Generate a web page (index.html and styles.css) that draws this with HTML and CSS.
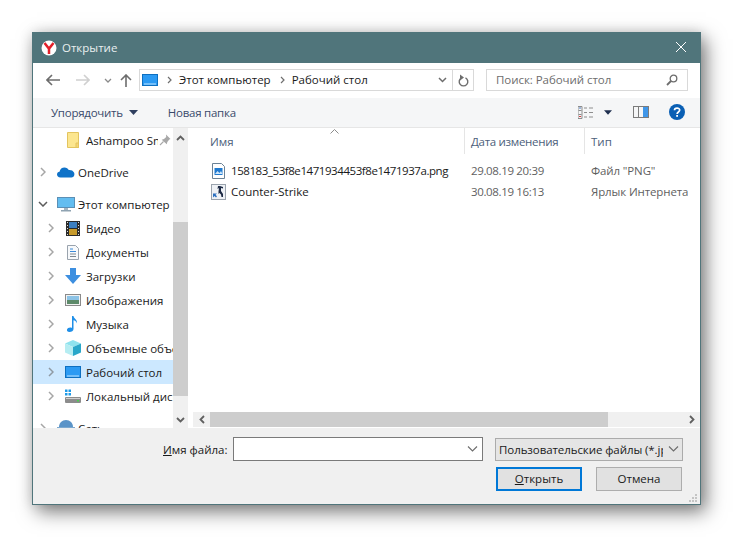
FILE: index.html
```html
<!DOCTYPE html>
<html lang="ru">
<head>
<meta charset="utf-8">
<title>Открытие</title>
<link rel="stylesheet" href="styles.css">
</head>
<body>
<div class="window">
  <header class="titlebar">
    <svg class="logo" width="16" height="16" viewBox="0 0 16 16"><circle cx="8" cy="8" r="7.5" fill="#fff"/><path d="M3.500 3 8 8.600V14M12.500 3 8 8.600" fill="none" stroke="#e3202a" stroke-width="2.500"/></svg>
    <span class="title-text">Открытие</span>
    <svg class="close" width="12" height="12" viewBox="0 0 12 12"><path d="M1 1l10 10M11 1 1 11" stroke="#fff" stroke-width="1" fill="none"/></svg>
  </header>

  <nav class="navbar">
    <svg class="nav-back" width="14" height="12" viewBox="0 0 14 12"><path d="M6 1 1 6l5 5M1 6h13" fill="none" stroke="#6d6d6d" stroke-width="1.6"/></svg>
    <svg class="nav-fwd" width="14" height="12" viewBox="0 0 14 12"><path d="M8 1l5 5-5 5M13 6H0" fill="none" stroke="#d0d0d0" stroke-width="1.6"/></svg>
    <svg class="nav-drop" width="8" height="5" viewBox="0 0 8 5"><path d="M1 1l3 3 3-3" fill="none" stroke="#8a8a8a" stroke-width="1.3"/></svg>
    <svg class="nav-up" width="12" height="13" viewBox="0 0 12 13"><path d="M1 6l5-5 5 5M6 1v12" fill="none" stroke="#6d6d6d" stroke-width="1.6"/></svg>
    <div class="address">
      <svg class="addr-icon" width="16" height="12" viewBox="0 0 16 12"><rect x=".5" y=".5" width="15" height="11" fill="#2b9af3" stroke="#0d6fc0"/><path d="M2 10h12" stroke="#bfe4ff"/></svg>
      <svg class="crumb-sep" width="5" height="8" viewBox="0 0 5 8"><path d="M1 1l3 3-3 3" fill="none" stroke="#6f6f6f" stroke-width="1.2"/></svg>
      <span class="crumb">Этот компьютер</span>
      <svg class="crumb-sep" width="5" height="8" viewBox="0 0 5 8"><path d="M1 1l3 3-3 3" fill="none" stroke="#6f6f6f" stroke-width="1.2"/></svg>
      <span class="crumb">Рабочий стол</span>
      <svg class="addr-drop" width="9" height="6" viewBox="0 0 9 6"><path d="M1 1l3.500 3.500L8 1" fill="none" stroke="#6d6d6d" stroke-width="1.500"/></svg>
      <div class="addr-refresh">
        <svg width="12" height="13" viewBox="0 0 12 13"><path d="M4.500 3.800A4.300 4.300 0 1 0 8.500 3.800" fill="none" stroke="#6d6d6d" stroke-width="1.400"/><path d="M3 .5v6l4-3z" fill="#6d6d6d"/></svg>
      </div>
    </div>
    <div class="search">
      <span class="search-text">Поиск: Рабочий стол</span>
      <svg width="12" height="12" viewBox="0 0 12 12"><circle cx="7.500" cy="4.500" r="3.300" fill="none" stroke="#6d6d6d" stroke-width="1.300"/><path d="M5 7l-4 4" stroke="#6d6d6d" stroke-width="1.800"/></svg>
    </div>
  </nav>

  <div class="toolbar">
    <span class="tool-btn">Упорядочить</span>
    <svg class="tool-caret" width="9" height="5" viewBox="0 0 9 5"><path d="M0 0h9L4.500 5z" fill="#2f3f5f"/></svg>
    <span class="tool-btn tool-new">Новая папка</span>
    <svg class="view-icon" width="16" height="13" viewBox="0 0 16 13"><path d="M0 .5h4v12H0zM.5 4.500h3M.5 8.500h3" fill="none" stroke="#8d8d8d"/><path d="M6 2h3M11 2h4M6 6.500h3M11 6.500h4M6 11h3M11 11h4" stroke="#8d8d8d"/><path d="M1 2h2" stroke="#4a78c0"/><path d="M1 10.500h2" stroke="#d04040"/></svg>
    <svg class="view-caret" width="8" height="5" viewBox="0 0 9 5"><path d="M0 0h9L4.500 5z" fill="#1f2f4f"/></svg>
    <svg class="pane-icon" width="16" height="12" viewBox="0 0 16 12"><rect x=".5" y=".5" width="15" height="11" fill="#f5f6f7" stroke="#7b7b7b"/><path d="M5.500 1v10" stroke="#7b7b7b"/><rect x="10" y="1" width="5" height="10" fill="#3f96e8"/></svg>
    <svg class="help-icon" width="16" height="16" viewBox="0 0 16 16"><circle cx="8" cy="8" r="8" fill="#0a5fb4"/><path d="M5.500 6.200C5.500 3.500 10.700 3.500 10.700 6.100 10.700 8 8.100 7.900 8.100 10" fill="none" stroke="#fff" stroke-width="1.700"/><rect x="7.200" y="11" width="1.800" height="1.800" fill="#fff"/></svg>
  </div>

  <div class="content">
    <aside class="tree">
      <div class="tree-row sub">
        <span class="chev-space"></span>
        <svg class="tree-icon folder" width="14" height="16" viewBox="0 0 14 16"><path d="M1.500.5h11v15h-11z" fill="#fce68f" stroke="#e3c45f"/><path d="M10 11h2.500v4.500H10z" fill="#f4d672" stroke="#e3c45f"/></svg>
        <span class="tree-label">Ashampoo Sn</span>
        <svg class="pin" width="12" height="12" viewBox="0 0 12 12"><path d="M7 .5l4.500 4.500-1.200.6-2 2.400-.5 2.300L2.700 5.700l2.300-.6 2.200-2z" fill="#a8a8a8"/><path d="M4.500 7.500 1 11" stroke="#a8a8a8" stroke-width="1.100"/></svg>
      </div>
      <div class="tree-row top">
        <svg class="chev" width="6" height="10" viewBox="0 0 6 10"><path d="M1 1l4 4-4 4" fill="none" stroke="#a6a6a6" stroke-width="1.500"/></svg>
        <svg class="tree-icon-wide" width="18" height="12" viewBox="0 0 18 12"><path d="M3.500 11.500C1.200 11.500 0 10 0 8.500 0 7 1 6 2.500 5.800 3 3 5 1.500 7.500 1.500 9.500 1.500 11 2.500 11.700 4 14 3.800 16 4.500 17 6.500 18 8.500 17 11.500 14.500 11.500z" fill="#0f72c8"/></svg>
        <span class="tree-label">OneDrive</span>
      </div>
      <div class="tree-row top">
        <svg class="chev chev-open" width="10" height="6" viewBox="0 0 10 6"><path d="M1 1l4 4 4-4" fill="none" stroke="#5c5c5c" stroke-width="1.500"/></svg>
        <svg class="tree-icon-wide" width="18" height="15" viewBox="0 0 18 15"><rect x=".5" y=".5" width="17" height="10" fill="#63bdf0" stroke="#5b8fb5"/><rect x="7" y="11" width="4" height="2" fill="#a5b5c0"/><rect x="4" y="13" width="10" height="1.500" fill="#8fa3b2"/></svg>
        <span class="tree-label">Этот компьютер</span>
      </div>
      <div class="tree-row sub">
        <svg class="chev" width="6" height="10" viewBox="0 0 6 10"><path d="M1 1l4 4-4 4" fill="none" stroke="#a6a6a6" stroke-width="1.500"/></svg>
        <svg class="tree-icon" width="14" height="15" viewBox="0 0 14 15"><rect width="14" height="15" fill="#2b2b2b"/><rect x="3" y="1" width="8" height="6" fill="#3c7fc0"/><rect x="3" y="8" width="8" height="6" fill="#c79a2b"/><path d="M1 1.500h1M1 4.500h1M1 7.500h1M1 10.500h1M1 13.500h1M12 1.500h1M12 4.500h1M12 7.500h1M12 10.500h1M12 13.500h1" stroke="#ddd"/></svg>
        <span class="tree-label">Видео</span>
      </div>
      <div class="tree-row sub">
        <svg class="chev" width="6" height="10" viewBox="0 0 6 10"><path d="M1 1l4 4-4 4" fill="none" stroke="#a6a6a6" stroke-width="1.500"/></svg>
        <svg class="tree-icon" width="14" height="15" viewBox="0 0 14 15"><path d="M1.500.5h8l3 3v11h-11z" fill="#f7f9fb" stroke="#9aa3ad"/><path d="M4 4h3M4 6.500h6" stroke="#3b8ad9"/><path d="M4 9h6M4 11.500h6" stroke="#7d8790"/></svg>
        <span class="tree-label">Документы</span>
      </div>
      <div class="tree-row sub">
        <svg class="chev" width="6" height="10" viewBox="0 0 6 10"><path d="M1 1l4 4-4 4" fill="none" stroke="#a6a6a6" stroke-width="1.500"/></svg>
        <svg class="tree-icon" width="16" height="16" viewBox="0 0 16 16"><path d="M5 0h6v7h5l-8 9-8-9h5z" fill="#3d8fe0"/></svg>
        <span class="tree-label">Загрузки</span>
      </div>
      <div class="tree-row sub">
        <svg class="chev" width="6" height="10" viewBox="0 0 6 10"><path d="M1 1l4 4-4 4" fill="none" stroke="#a6a6a6" stroke-width="1.500"/></svg>
        <svg class="tree-icon" width="16" height="12" viewBox="0 0 16 12"><rect x=".5" y=".5" width="15" height="11" fill="#f2f2f2" stroke="#8a8a8a"/><rect x="2" y="2" width="12" height="4" fill="#8cc3e6"/><rect x="2" y="6" width="12" height="4" fill="#5d8a6a"/></svg>
        <span class="tree-label">Изображения</span>
      </div>
      <div class="tree-row sub">
        <svg class="chev" width="6" height="10" viewBox="0 0 6 10"><path d="M1 1l4 4-4 4" fill="none" stroke="#a6a6a6" stroke-width="1.500"/></svg>
        <svg class="tree-icon" width="14" height="16" viewBox="0 0 14 16"><path d="M6 0h1.500c.3 2.500 4 3.500 3.500 7.500-.5-2-2-3-3.500-3.200V13c0 2-2 3-4 3s-2.800-1.200-2.500-2.400C1.400 12 4 11 6 12z" fill="#1f8fe8"/></svg>
        <span class="tree-label">Музыка</span>
      </div>
      <div class="tree-row sub">
        <svg class="chev" width="6" height="10" viewBox="0 0 6 10"><path d="M1 1l4 4-4 4" fill="none" stroke="#a6a6a6" stroke-width="1.500"/></svg>
        <svg class="tree-icon" width="16" height="16" viewBox="0 0 16 16"><path d="M8 0l8 3.500-8 3.500-8-3.500z" fill="#8fe3ee"/><path d="M0 3.500 8 7v9l-8-3.500z" fill="#b6edf2"/><path d="M16 3.500 8 7v9l8-3.500z" fill="#2aa7c9"/></svg>
        <span class="tree-label">Объемные объекты</span>
      </div>
      <div class="tree-row sub selected">
        <svg class="chev" width="6" height="10" viewBox="0 0 6 10"><path d="M1 1l4 4-4 4" fill="none" stroke="#8f9aa3" stroke-width="1.500"/></svg>
        <svg class="tree-icon" width="16" height="12" viewBox="0 0 16 12"><rect x=".5" y=".5" width="15" height="11" fill="#2b9af3" stroke="#0d6fc0"/><path d="M2 10h12" stroke="#bfe4ff"/></svg>
        <span class="tree-label">Рабочий стол</span>
      </div>
      <div class="tree-row sub">
        <svg class="chev" width="6" height="10" viewBox="0 0 6 10"><path d="M1 1l4 4-4 4" fill="none" stroke="#a6a6a6" stroke-width="1.500"/></svg>
        <svg class="tree-icon" width="16" height="14" viewBox="0 0 16 14"><path d="M0 .5h2.500V3H0zM3.500.5H6V3H3.500zM0 4h2.500v2.500H0zM3.500 4H6v2.500H3.500z" fill="#1e9be8"/><rect y="8" width="16" height="6" rx="1" fill="#8c8c8c"/><rect x="1" y="9" width="14" height="1" fill="#cfcfcf"/><rect x="12" y="11" width="2" height="1.500" fill="#49d14f"/></svg>
        <span class="tree-label">Локальный диск (C:)</span>
      </div>
      <div class="tree-row top">
        <svg class="chev" width="6" height="10" viewBox="0 0 6 10"><path d="M1 1l4 4-4 4" fill="none" stroke="#a6a6a6" stroke-width="1.500"/></svg>
        <svg class="tree-icon-wide" width="18" height="16" viewBox="0 0 18 16"><path d="M9 0c4 0 7 3 7 7H2c0-4 3-7 7-7z" fill="#5b94c8"/><rect y="7" width="18" height="9" fill="#7da9cf"/></svg>
        <span class="tree-label">Сеть</span>
      </div>
    </aside>

    <div class="vscroll">
      <svg width="9" height="6" viewBox="0 0 9 6"><path d="M1 5l3.500-3.500L8 5" fill="none" stroke="#606060" stroke-width="1.800"/></svg>
      <div class="vthumb"></div>
      <svg width="9" height="6" viewBox="0 0 9 6"><path d="M1 1l3.500 3.500L8 1" fill="none" stroke="#606060" stroke-width="1.800"/></svg>
    </div>

    <main class="files">
      <div class="columns">
        <div class="col col-name">Имя
          <svg class="sort" width="9" height="5" viewBox="0 0 9 5"><path d="M.5 4.500l4-4 4 4" fill="none" stroke="#8c8c8c"/></svg>
        </div>
        <div class="col col-date">Дата изменения</div>
        <div class="col col-type">Тип</div>
      </div>
      <div class="file-list">
        <div class="file-row">
          <div class="cell-name">
            <svg class="file-icon" width="13" height="16" viewBox="0 0 13 16"><path d="M.5.500h9l3 3v12H.5z" fill="#fff" stroke="#6b8296"/><rect x="2.500" y="5" width="8" height="7" fill="#1f7ad0"/><path d="M3 11l2.500-3 2 2 1.500-2 1.500 3z" fill="#cfe6fa"/></svg>
            <span class="file-long">158183_53f8e1471934453f8e1471937a.png</span>
          </div>
          <div class="cell-date">29.08.19 20:39</div>
          <div class="cell-type">Файл "PNG"</div>
        </div>
        <div class="file-row">
          <div class="cell-name">
            <svg class="file-icon" width="15" height="16" viewBox="0 0 15 16"><rect x=".5" y=".5" width="14" height="15" fill="#eef1f5" stroke="#9aa3ad"/><path d="M7 2h2l3 1v1.500L10 4v3l2 3v3h-1.500L10 10.500 8.500 9 7.500 10V7.500L8 4 6.500 5z" fill="#1d2a44"/><path d="M2 13.500v-4h4l-1.500 1.200 1.500 1.500-1 1.300-1.500-1.500z" fill="#2a6fc0"/></svg>
            <span>Counter-Strike</span>
          </div>
          <div class="cell-date">30.08.19 16:13</div>
          <div class="cell-type">Ярлык Интернета</div>
        </div>
      </div>
      <div class="hscroll">
        <svg class="h-arrow" width="6" height="9" viewBox="0 0 6 9"><path d="M5 1 1.500 4.500 5 8" fill="none" stroke="#606060" stroke-width="1.800"/></svg>
        <div class="hthumb"></div>
        <svg class="h-arrow h-right" width="6" height="9" viewBox="0 0 6 9"><path d="M1 1l3.500 3.500L1 8" fill="none" stroke="#606060" stroke-width="1.800"/></svg>
      </div>
    </main>
  </div>

  <footer class="bottom">
    <div class="bottom-row">
      <label class="file-label"><u>И</u>мя файла:</label>
      <div class="file-input">
        <svg width="11" height="6" viewBox="0 0 11 6"><path d="M1 .5l4.500 4.500L10 .5" fill="none" stroke="#6d6d6d" stroke-width="1.100"/></svg>
      </div>
      <div class="file-type">
        <span class="file-type-text">Пользовательские файлы (*.jpg)</span>
        <svg width="11" height="6" viewBox="0 0 11 6"><path d="M1 .5l4.500 4.500L10 .5" fill="none" stroke="#6d6d6d" stroke-width="1.100"/></svg>
      </div>
    </div>
    <div class="button-row">
      <button class="btn btn-primary"><u>О</u>ткрыть</button>
      <button class="btn">Отмена</button>
    </div>
    <svg class="grip" width="8" height="8" viewBox="0 0 8 8"><path d="M6 0h2v2H6zM3 3h2v2H3zM6 3h2v2H6zM0 6h2v2H0zM3 6h2v2H3zM6 6h2v2H6z" fill="#c4c4c4"/></svg>
  </footer>
</div>
</body>
</html>
```
FILE: styles.css
```css
* { box-sizing: border-box; }
html, body { margin: 0; height: 100%; overflow: hidden; background: #fff; }
body {
  padding: 32px 0 0 32px;
  font-family: "Open Sans", "Noto Sans", sans-serif;
  font-size: 11.5px;
  color: #1a1a1a;
}
svg { display: block; flex: none; }

.window {
  width: 669px;
  height: 473px;
  display: flex;
  flex-direction: column;
  border: 1px solid #50757b;
  border-top: 0;
  background: #fff;
  box-shadow: 5px 7px 18px rgba(0, 0, 0, .5), 0 0 12px rgba(0, 0, 0, .12);
}

.titlebar {
  height: 31px;
  flex: none;
  display: flex;
  align-items: center;
  margin: 0 -1px;
  padding: 0 14px 0 9px;
  background: #50757b;
  color: #fff;
}
.title-text { margin-left: 5px; flex: 1; color: #e9eff0; }
.close { margin-top: -2px; }

.navbar {
  height: 35px;
  flex: none;
  display: flex;
  align-items: center;
  background: #fff;
  padding: 0 12px 1px 13px;
}
.nav-fwd { margin-left: 16px; }
.nav-drop { margin-left: 14px; }
.nav-up { margin-left: 8px; }
.address {
  margin-left: 7px;
  width: 335px;
  height: 22px;
  flex: none;
  display: flex;
  align-items: center;
  border: 1px solid #d9d9d9;
  padding-left: 2px;
}
.crumb-sep { margin: 0 7px 0 9px; }
.crumb { white-space: nowrap; margin-bottom: 2px; }
.addr-drop { margin-left: auto; margin-right: 5px; }
.addr-refresh {
  width: 21px;
  height: 100%;
  display: flex;
  align-items: center;
  justify-content: center;
  border-left: 1px solid #d9d9d9;
}
.search {
  margin-left: 12px;
  width: 202px;
  height: 22px;
  flex: none;
  display: flex;
  align-items: center;
  justify-content: space-between;
  border: 1px solid #d9d9d9;
  padding: 0 9px;
  color: #6d6d6d;
}
.search-text { letter-spacing: -.05px; margin-bottom: 2px; }

.toolbar {
  height: 30px;
  flex: none;
  display: flex;
  align-items: center;
  background: #f5f6f7;
  border-bottom: 1px solid #e6e6e6;
  padding-left: 18px;
  padding-bottom: 1px;
}
.tool-btn { color: #3a4a6b; letter-spacing: -.25px; }
.tool-caret { margin-left: 6px; }
.tool-new { margin-left: 30px; }
.view-icon { margin-left: auto; }
.view-caret { margin-left: 10px; }
.pane-icon { margin-left: 21px; }
.help-icon { margin-left: 20px; margin-right: 15px; }

.content {
  height: 300px;
  flex: none;
  display: flex;
  overflow: hidden;
}
.tree {
  width: 140px;
  flex: none;
  display: flex;
  flex-direction: column;
  overflow: hidden;
}
.tree-row {
  height: 24px;
  flex: none;
  display: flex;
  align-items: center;
  white-space: nowrap;
}
.tree-row.top { margin-top: 8px; padding-left: 7px; }
.tree-row.sub { padding-left: 15px; }
.chev-space { width: 6px; flex: none; }
.tree-icon { margin-left: 11px; flex: none; }
.sub .tree-icon { width: 16px; margin-right: 5px; }
.tree-icon-wide { margin-left: 11px; margin-right: 3px; flex: none; }
.chev-open { margin-left: -2px; margin-right: -2px; }
.tree-label { overflow: hidden; min-width: 0; flex: 1; }
.pin { margin-right: 2px; margin-left: 1px; }
.selected { background: #cce8ff; }

.vscroll {
  width: 15px;
  flex: none;
  display: flex;
  flex-direction: column;
  align-items: center;
  background: #f0f0f0;
  padding: 7px 0 5px;
}
.vthumb {
  width: 15px;
  height: 174px;
  margin: 81px 0 auto;
  background: #cdcdcd;
}

.files {
  flex: 1;
  min-width: 0;
  display: flex;
  flex-direction: column;
  padding-left: 5px;
  background: #fff;
}
.columns {
  height: 26px;
  flex: none;
  display: flex;
}
.col {
  height: 100%;
  display: flex;
  align-items: center;
  color: #4c607a;
  padding-left: 6px;
  border-right: 1px solid #e5e5e5;
  position: relative;
}
.col-name { width: 272px; padding-left: 17px; }
.col-date { width: 120px; letter-spacing: -.3px; }
.col-type { flex: 1; border-right: 0; }
.sort { position: absolute; left: 137px; top: 1px; }
.file-list {
  flex: 1;
  padding-top: 6px;
  display: flex;
  flex-direction: column;
}
.file-row {
  height: 21px;
  flex: none;
  display: flex;
  align-items: center;
  white-space: nowrap;
}
.cell-name {
  width: 272px;
  flex: none;
  display: flex;
  align-items: center;
  padding-left: 18px;
  color: #1a1a1a;
}
.file-icon { margin-right: 5px; width: 15px; }
.file-long { letter-spacing: -.43px; }
.cell-date { width: 120px; flex: none; padding-left: 6px; color: #5f5f5f; letter-spacing: -.35px; }
.cell-type { padding-left: 6px; color: #5f5f5f; overflow: hidden; letter-spacing: -.12px; }
.hscroll {
  height: 15px;
  flex: none;
  margin-bottom: 1px;
  display: flex;
  align-items: center;
  background: #f0f0f0;
}
.h-arrow { margin: 0 6px; }
.hthumb { width: 398px; height: 15px; margin-left: -1px; margin-right: auto; background: #cdcdcd; }
.h-right { margin-right: 5px; }

.bottom {
  flex: 1;
  display: flex;
  flex-direction: column;
  background: #f0f0f0;
  padding-top: 9px;
  position: relative;
}
.bottom-row {
  height: 24px;
  display: flex;
  align-items: center;
}
.file-label { margin-left: 130px; width: 70px; flex: none; color: #1a1a1a; }
.file-input {
  width: 250px;
  height: 24px;
  flex: none;
  display: flex;
  align-items: center;
  justify-content: flex-end;
  padding-right: 4px;
  background: #fff;
  border: 1px solid #7a7a7a;
}
.file-type {
  margin-left: 12px;
  width: 188px;
  height: 23px;
  flex: none;
  display: flex;
  align-items: center;
  justify-content: space-between;
  background: #e5e5e5;
  border: 1px solid #ababab;
  padding: 0 3px;
}
.file-type-text { width: 164px; overflow: hidden; white-space: nowrap; color: #1a1a1a; letter-spacing: -.08px; }
.button-row {
  display: flex;
  justify-content: flex-end;
  gap: 14px;
  margin-top: 6px;
  padding-right: 18px;
}
.btn {
  width: 86px;
  height: 24px;
  font: inherit;
  color: #1a1a1a;
  background: #e1e1e1;
  border: 1px solid #adadad;
  padding: 0 0 2px;
}
.btn-primary { border: 2px solid #0078d7; padding-bottom: 2px; }
.grip { position: absolute; right: 3px; bottom: 2px; }
```
